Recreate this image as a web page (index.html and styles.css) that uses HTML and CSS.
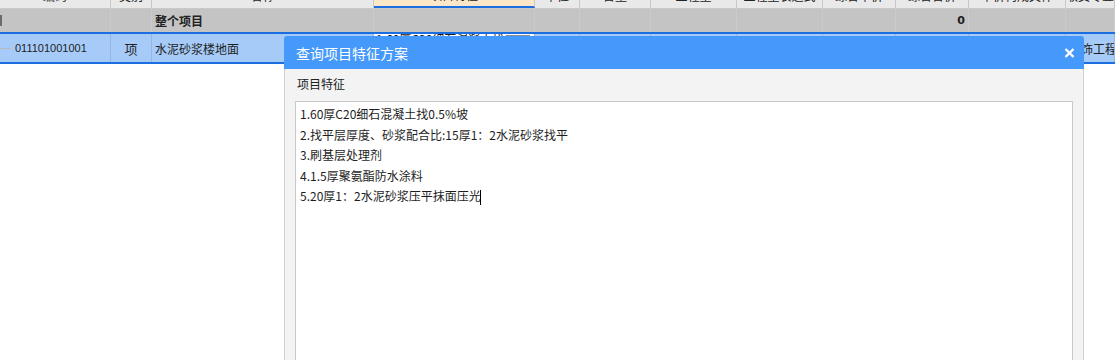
FILE: index.html
```html
<!DOCTYPE html>
<html lang="zh-CN">
<head>
<meta charset="utf-8">
<title>查询项目特征方案</title>
<link rel="stylesheet" href="styles.css">
</head>
<body>
<div class="grid">
  <div class="row head">
    <div class="c">编码</div>
    <div class="c">类别</div>
    <div class="c">名称</div>
    <div class="c active">项目特征</div>
    <div class="c">单位</div>
    <div class="c">含量</div>
    <div class="c">工程量</div>
    <div class="c">工程量表达式</div>
    <div class="c">综合单价</div>
    <div class="c">综合合价</div>
    <div class="c">单价构成文件</div>
    <div class="c">取费专业</div>
  </div>
  <div class="row group">
    <div class="c"><span class="mark"></span></div>
    <div class="c"></div>
    <div class="c name">整个项目</div>
    <div class="c"></div>
    <div class="c"></div>
    <div class="c"></div>
    <div class="c"></div>
    <div class="c"></div>
    <div class="c"></div>
    <div class="c num">0</div>
    <div class="c"></div>
    <div class="c"></div>
  </div>
  <div class="row sel">
    <div class="c code"><span class="tree"></span>011101001001</div>
    <div class="c center">项</div>
    <div class="c name">水泥砂浆楼地面</div>
    <div class="c editor"><span class="etext">1.60厚C20细石混凝土找0.5%坡</span><span class="ebtn"></span></div>
    <div class="c"></div>
    <div class="c"></div>
    <div class="c"></div>
    <div class="c"></div>
    <div class="c"></div>
    <div class="c"></div>
    <div class="c top">[装饰装修工程]</div>
    <div class="c spec">装饰工程</div>
  </div>
</div>

<div class="dialog">
  <div class="dlg-head">
    <span class="dlg-title">查询项目特征方案</span>
    <svg class="dlg-close" width="11" height="10" viewBox="0 0 11 10"><path d="M1.5 1 L9.5 9 M9.5 1 L1.5 9" stroke="#fff" stroke-width="2.4" stroke-linecap="butt"/></svg>
  </div>
  <div class="dlg-body">
    <div class="label">项目特征</div>
    <div class="textarea">
      <div class="line">1.60厚C20细石混凝土找0.5%坡</div>
      <div class="line">2.找平层厚度、砂浆配合比:15厚1：2水泥砂浆找平</div>
      <div class="line">3.刷基层处理剂</div>
      <div class="line">4.1.5厚聚氨酯防水涂料</div>
      <div class="line">5.20厚1：2水泥砂浆压平抹面压光<span class="caret"></span></div>
    </div>
  </div>
</div>
</body>
</html>
```

FILE: styles.css
```css
html, body {
  margin: 0;
  padding: 0;
  overflow: hidden;
  background: #ffffff;
  width: 1115px;
  height: 360px;
}
body {
  position: relative;
  font-family: "Noto Sans CJK SC", "Liberation Sans", sans-serif;
  font-size: 12px;
  color: #1e1e1e;
}
.grid {
  margin-top: -18px;
}
.row {
  display: grid;
  grid-template-columns: 111px 41px 222px 161px 45px 71px 86px 86px 73px 73px 97px 1fr;
}
.c {
  box-sizing: border-box;
  border-right: 1px solid #cfcfcf;
  display: flex;
  align-items: center;
  overflow: hidden;
  white-space: nowrap;
}
.head {
  height: 27px;
  background: #e9e9e9;
  border-bottom: 1px solid #c9c9c9;
  box-sizing: border-box;
}
.head .c {
  justify-content: center;
  color: #222;
  font-size: 12px;
  border-right-color: #c8c8c8;
}
.head .active {
  background: #fde7c9;
  border-bottom: 2px solid #1a6ee0;
}
.group {
  height: 23px;
  background: #c4c4c4;
}
.group .c {
  border-right-color: #cbcbcb;
}
.group .name {
  font-weight: bold;
  padding-left: 3px;
  color: #222;
}
.group .num {
  justify-content: flex-end;
  padding-right: 3px;
  font-family: "DejaVu Sans", sans-serif;
  font-weight: bold;
  font-size: 11px;
}
.mark {
  width: 2px;
  height: 11px;
  background: #6c6c6c;
}
.sel {
  height: 32px;
  box-sizing: border-box;
  background: #a6cbf8;
  border-top: 2px solid #1a6ee0;
  border-bottom: 2px solid #1a6ee0;
}
.sel .c {
  border-right-color: #98b6dc;
}
.sel .code {
  font-family: "Liberation Sans", sans-serif;
  font-size: 11px;
}
.tree {
  width: 11px;
  height: 1px;
  background: #b9b9b9;
  margin-right: 4px;
}
.sel .center {
  justify-content: center;
  font-size: 13px;
}
.sel .name {
  padding-left: 3px;
}
.sel .editor {
  background: #ffffff;
  align-items: flex-start;
  position: relative;
  padding-left: 2px;
}
.etext {
  font-size: 12px;
  margin-top: -4px;
}
.ebtn {
  position: absolute;
  right: 4px;
  top: 1px;
  width: 24px;
  height: 12px;
  background: #e0e0e0;
  border: 1px solid #8a8a8a;
  box-sizing: border-box;
}
.sel .top {
  align-items: flex-start;
  padding-left: 8px;
  font-size: 11px;
}
.sel .spec {
  padding-left: 3px;
  font-size: 12px;
}
.dialog {
  position: absolute;
  left: 284px;
  top: 36px;
  width: 800px;
  height: 340px;
  box-sizing: border-box;
  border: 1px solid #cfcfcf;
  border-radius: 3px 3px 0 0;
  background: #f3f3f3;
  display: flex;
  flex-direction: column;
}
.dlg-head {
  height: 33px;
  background: #4599fa;
  display: flex;
  align-items: center;
  justify-content: space-between;
  padding: 0 9px 0 12px;
  margin: -1px -1px 0 -1px;
  border-radius: 3px 3px 0 0;
}
.dlg-title {
  color: #ffffff;
  font-size: 14px;
}
.dlg-close {
  display: block;
}
.dlg-body {
  padding: 7px 10px 0 10px;
  display: flex;
  flex-direction: column;
  flex: 1;
}
.label {
  font-size: 12px;
  line-height: 16px;
  color: #222;
  margin-left: 2px;
  margin-bottom: 9px;
}
.textarea {
  flex: 1;
  background: #ffffff;
  border: 1px solid #c9c9c9;
  padding: 2px 4px;
}
.line {
  font-size: 12px;
  line-height: 20.5px;
  color: #1e1e1e;
  white-space: nowrap;
}
.caret {
  display: inline-block;
  width: 1px;
  height: 15px;
  background: #000;
  vertical-align: middle;
  margin-left: -1px;
}
```
